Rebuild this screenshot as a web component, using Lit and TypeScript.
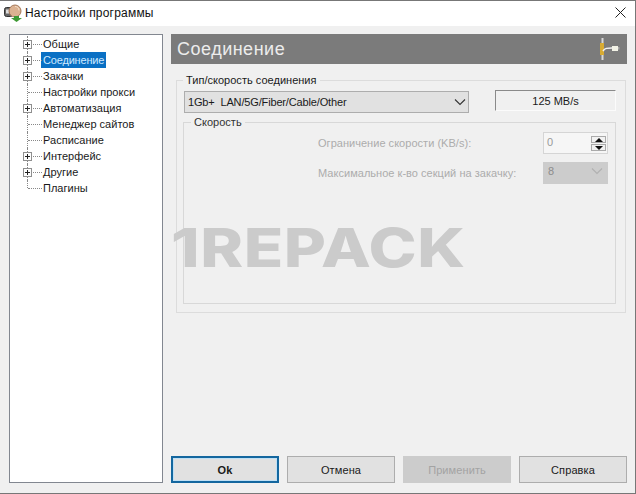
import { LitElement, html, css, svg } from "lit";
import { customElement } from "lit/decorators.js";

const items: [string, boolean][] = [
  ["Общие", true], ["Соединение", true], ["Закачки", true], ["Настройки прокси", false],
  ["Автоматизация", true], ["Менеджер сайтов", false], ["Расписание", false],
  ["Интерфейс", true], ["Другие", true], ["Плагины", false],
];

@customElement("app-root")
export class AppRoot extends LitElement {
  static styles = css`
    :host { display: block; width: 636px; height: 494px; font-family: "Liberation Sans", Arial, sans-serif; font-size: 11px; color: #1a1a1a; }
    * { box-sizing: border-box; }
    .win { position: relative; width: 636px; height: 494px; background: #f0f0f0; border: 1px solid #777; border-width: 1px 1px 1px 0; display: flex; flex-direction: column; overflow: hidden; }
    .title { height: 25px; background: #fff; display: flex; align-items: center; padding: 0 9px 2px 4px; gap: 1px; font-size: 12px; color: #111; letter-spacing: .2px; flex: none; }
    .title .t { flex: 1; }
    .main { flex: 1; display: flex; padding: 8px 8px 10px 9px; gap: 8px; min-height: 0; }
    .tree { position: relative; width: 154px; background: #fff; border: 1px solid #828790; padding: 1px 0 0 12px; flex: none; }
    .row { height: 16px; display: flex; align-items: center; position: relative; font-size: 11px; letter-spacing: .02px; }
    .cell { width: 21px; height: 16px; flex: none; position: relative; }
    .label { padding: 1px 2px; line-height: 14px; white-space: nowrap; margin-left: -2px; }
    .sel { background: #0a70c4; color: #cfeaff; letter-spacing: -.18px; }
    .vline { position: absolute; left: 5px; top: 0; bottom: 0; border-left: 1px dotted #888; }
    .vline.last { bottom: 8px; }
    .hline { position: absolute; left: 6px; right: 1px; top: 8px; border-top: 1px dotted #888; }
    .box { position: absolute; left: 1px; top: 4px; width: 9px; height: 9px; background: #fdfdfd; border: 1px solid #8f8f8f; }
    .box::before { content: ""; position: absolute; left: 1px; right: 1px; top: 3px; height: 1px; background: #222; }
    .box::after { content: ""; position: absolute; top: 1px; bottom: 1px; left: 3px; width: 1px; background: #222; }
    .right { flex: 1; display: flex; flex-direction: column; min-width: 0; }
    .head { height: 30px; background: #7b7b7b; color: #ececec; display: flex; align-items: center; justify-content: space-between; padding: 0 5px 0 6px; font-size: 18px; flex: none; letter-spacing: .5px; }
    .group { position: relative; border: 1px solid #dcdcdc; margin: 16px 1px 0 5px; height: 233px; padding: 0 10px; }
    .legend { position: absolute; top: -7px; background: #f0f0f0; line-height: 13px; padding: 0 3px; letter-spacing: .02px; }
    .g1 { left: 6px; }
    .g2 { left: 7px; color: #333; }
    .top { display: flex; justify-content: space-between; align-items: center; margin: 10px -1px 0 -3px; }
    .combo { width: 285px; height: 22px; background: #e1e1e1; border: 1px solid #adadad; display: flex; align-items: center; justify-content: space-between; padding: 0 2px 0 3px; letter-spacing: -.15px; }
    .speed { width: 121px; height: 21px; border: 1px solid; border-color: #8a8a8a #fbfbfb #fbfbfb #8a8a8a; display: flex; align-items: center; justify-content: center; margin-top: -3px; }
    .inner { position: relative; margin: 9px 0 0 -4px; width: 433px; height: 182px; border: 1px solid #d8d8d8; }
    .form { display: grid; grid-template-columns: 1fr 65px; row-gap: 8px; padding: 9px 7px 0 0; align-items: center; color: #acacac; letter-spacing: .03px; }
    .form .lab { padding-left: 134px; white-space: nowrap; }
    .spin { height: 22px; background: #f6f6f6; border: 1px solid #d5d5d5; display: flex; justify-content: space-between; padding: 1px; color: #999; }
    .spin span { padding: 2px 0 0 2px; }
    .arrows { display: flex; flex-direction: column; gap: 1px; width: 15px; margin-top: 2px; }
    .arr { height: 7px; background: #f2f2f2; border: 1px solid #aaa; display: flex; align-items: center; justify-content: center; }
    .drop { height: 22px; background: #cccccc; display: flex; justify-content: space-between; align-items: center; padding: 0 5px 4px 5px; color: #8d8d8d; }
    .spacer { flex: 1; }
    .btns { display: flex; gap: 8px; flex: none; }
    .btn { width: 108px; height: 27px; background: #e1e1e1; border: 1px solid #adadad; display: flex; align-items: center; justify-content: center; letter-spacing: .1px; }
    .ok { border: 2px solid #14679f; box-shadow: inset 0 0 0 1px #bfe0f5; font-weight: 700; }
    .dis { background: #cccccc; border-color: #cccccc; color: #a3a3a3; }
    .wm { position: absolute; left: 171px; top: 212px; font-family: Inter, "Liberation Sans", sans-serif; font-weight: 800; font-size: 54px; line-height: 70px; color: #cbcbcb; letter-spacing: .5px; transform: scaleX(1.2); transform-origin: left center; pointer-events: none; }
  `;

  private chev(c: string) {
    return svg`<svg width="12" height="8" viewBox="0 0 12 8"><path d="M1 1.5 6 6.5 11 1.5" fill="none" stroke="${c}" stroke-width="1.1"/></svg>`;
  }

  render() {
    return html`<div class="win">
      <div class="title">
        <svg width="20" height="20" viewBox="0 0 20 20">
          <rect x="0.5" y="4.5" width="8" height="9" rx="2" fill="#666" stroke="#333"/>
          <rect x="2" y="6.5" width="3" height="4" fill="#ddd"/>
          <circle cx="11" cy="8" r="6" fill="#dcb291" stroke="#a5795a"/>
          <path d="M11 3.5c2.5 0 4 1.5 4 4" stroke="#f3dfcb" fill="none"/>
          <path d="M10 13h5v2h3l-5.500 4L7 15h3z" fill="#3f9a35"/>
        </svg>
        <span class="t">Настройки программы</span>
        <svg width="11" height="11" viewBox="0 0 11 11"><path d="M.5 .5 10.500 10.500M10.500 .5 .5 10.500" stroke="#222" stroke-width="1"/></svg>
      </div>
      <div class="main">
        <div class="tree">
          ${items.map(([n, plus], i) => html`<div class="row">
            <div class="cell">
              <div class="vline ${i === items.length - 1 ? "last" : ""}"></div>
              <div class="hline"></div>
              ${plus ? html`<div class="box"></div>` : ""}
            </div>
            <span class="label ${i === 1 ? "sel" : ""}">${n}</span>
          </div>`)}
        </div>
        <div class="right">
          <div class="head">
            <span>Соединение</span>
            <svg width="22" height="24" viewBox="0 0 22 24">
              <rect x="1.500" y="1" width="2" height="22" fill="#d9d9d9"/>
              <rect x="0" y="6" width="4" height="12" fill="#d8ab33"/>
              <path d="M3 14c2-3 4-3 9-3" stroke="#f4f4f4" stroke-width="1.500" fill="none"/>
              <rect x="12" y="9" width="6" height="5" fill="#f2f2e6"/>
              <rect x="18" y="10" width="1.500" height="2.500" fill="#aaa"/>
            </svg>
          </div>
          <div class="group">
            <span class="legend g1">Тип/скорость соединения</span>
            <div class="top">
              <div class="combo"><span>1Gb+&nbsp; LAN/5G/Fiber/Cable/Other</span>${this.chev("#333")}</div>
              <div class="speed">125 MB/s</div>
            </div>
            <div class="inner">
              <span class="legend g2">Скорость</span>
              <div class="form">
                <div class="lab">Ограничение скорости (KB/s):</div>
                <div class="spin"><span>0</span><div class="arrows">
                  <div class="arr"><svg width="8" height="4"><path d="M0 4 4 0 8 4z" fill="#111"/></svg></div>
                  <div class="arr"><svg width="8" height="4"><path d="M0 0 4 4 8 0z" fill="#111"/></svg></div>
                </div></div>
                <div class="lab">Максимальное к-во секций на закачку:</div>
                <div class="drop"><span>8</span>${this.chev("#b0b0b0")}</div>
              </div>
            </div>
          </div>
          <div class="spacer"></div>
          <div class="btns">
            <div class="btn ok">Ok</div>
            <div class="btn">Отмена</div>
            <div class="btn dis">Применить</div>
            <div class="btn">Справка</div>
          </div>
        </div>
      </div>
      <div class="wm">1REPACK</div>
    </div>`;
  }
}
